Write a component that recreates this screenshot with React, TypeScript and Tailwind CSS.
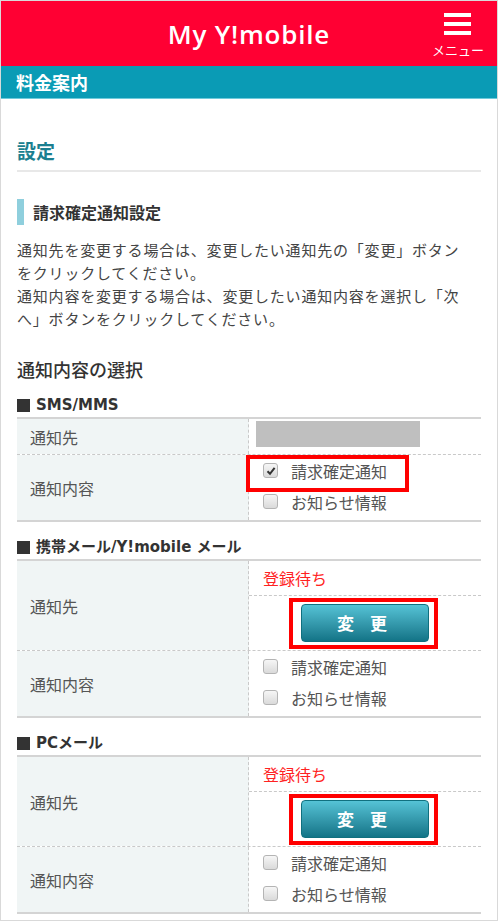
const jp = { fontFamily: '"Noto Sans CJK JP", "Noto Sans", sans-serif' };
const heading = { fontFamily: '"DejaVu Sans", "Noto Sans CJK JP", sans-serif' };

function Checkbox({ checked }: { checked?: boolean }) {
  return (
    <span className="flex h-[15px] w-[15px] items-center justify-center rounded-[3px] border border-[#b4b4b4] bg-gradient-to-b from-[#f6f6f6] to-[#dadada]">
      {checked && (
        <svg width="10" height="10" viewBox="0 0 10 10">
          <path d="M1.5 5.2 L4 7.8 L8.6 1.8" fill="none" stroke="#333" strokeWidth="2" />
        </svg>
      )}
    </span>
  );
}

function Options({ checked, marked }: { checked?: boolean; marked?: boolean }) {
  return (
    <div className="relative flex flex-col pl-[14px]">
      {marked && (
        <div className="absolute left-[-3px] top-0 h-[37px] w-[163px] border-4 border-[#ff0000]" />
      )}
      {["請求確定通知", "お知らせ情報"].map((t, i) => (
        <div key={t} className="flex h-[31px] items-center gap-[13px] text-[16px] text-[#555]">
          <Checkbox checked={checked && i === 0} />
          <span>{t}</span>
        </div>
      ))}
    </div>
  );
}

function ChangeButton() {
  return (
    <div className="relative flex h-[54px] items-start justify-center pt-[8px]">
      <div className="absolute left-[40px] top-[2px] h-[51px] w-[149px] border-4 border-[#ff0000]" />
      <button className="h-[38px] w-[128px] rounded-[4px] border border-[#10707f] bg-gradient-to-b from-[#55c3d6] to-[#127487] text-[17px] font-bold tracking-[6px] text-white">
        変 更
      </button>
    </div>
  );
}

function Section({ title, mt, children }: { title: string; mt: string; children: React.ReactNode }) {
  return (
    <section className={mt}>
      <h4 style={heading} className="flex h-[21px] items-center gap-[6px] text-[15px] font-bold text-[#333]">
        <span className="h-[13px] w-[13px] bg-[#333]" />
        {title}
      </h4>
      <div className="mt-px border-y-2 border-[#d4d4d4]">{children}</div>
    </section>
  );
}

function Row({ label, h, last, children }: { label: string; h: string; last?: boolean; children: React.ReactNode }) {
  return (
    <div className={`grid grid-cols-2 ${h} ${last ? "" : "border-b border-dashed border-[#c9c9c9]"}`}>
      <div className="flex items-center border-r border-dashed border-[#c9c9c9] bg-[#f0f5f5] pl-[13px] text-[16px] text-[#555]">
        {label}
      </div>
      <div className="relative">{children}</div>
    </div>
  );
}

function Pending() {
  return (
    <>
      <div className="flex h-[35px] items-center border-b border-dashed border-[#c9c9c9] pl-[14px] text-[16px] text-[#ff2222]">
        登録待ち
      </div>
      <ChangeButton />
    </>
  );
}

export default function App() {
  return (
    <div style={jp} className="h-[921px] w-[498px] overflow-hidden border border-[#d9d9d9] bg-white">
      <header className="grid h-[65px] grid-cols-[1fr_auto_1fr] items-center bg-[#ff0033] text-white">
        <div />
        <div className="pt-[2px] text-[26px] font-semibold tracking-[0.8px]" style={{ fontFamily: '"Open Sans", sans-serif' }}>
          My Y!mobile
        </div>
        <div className="flex justify-end pr-[13px]">
          <div className="flex flex-col items-center pt-[2px]">
            <div className="flex flex-col gap-[5px]">
              <span className="h-[4px] w-[27px] bg-white" />
              <span className="h-[4px] w-[27px] bg-white" />
              <span className="h-[4px] w-[27px] bg-white" />
            </div>
            <span className="mt-[8px] text-[13px] leading-[14px]">メニュー</span>
          </div>
        </div>
      </header>
      <div className="flex h-[33px] items-center border-b border-[#6fcadb] bg-[#0a9bb5] pl-[15px] text-[18px] font-bold text-white">
        料金案内
      </div>

      <main className="px-[16px]">
        <h2 className="mt-[39px] border-b-2 border-[#e8e8e8] pb-[6px] text-[19px] font-bold leading-[26px] text-[#1b7f90]">
          設定
        </h2>
        <h3 className="mt-[27px] border-l-[7px] border-[#8fcfdd] pl-[9px] text-[16px] font-bold leading-[26px] text-[#333]">
          請求確定通知設定
        </h3>
        <p className="mt-[13px] text-[15px] leading-[23px] tracking-[0.8px] text-[#444]">
          通知先を変更する場合は、変更したい通知先の「変更」ボタン
          <br />
          をクリックしてください。
          <br />
          通知内容を変更する場合は、変更したい通知内容を選択し「次
          <br />
          へ」ボタンをクリックしてください。
        </p>
        <h3 className="mt-[27px] text-[18px] font-medium leading-[25px] text-[#333]">通知内容の選択</h3>

        <Section title="SMS/MMS" mt="mt-[13px]">
          <Row label="通知先" h="h-[36px]">
            <div className="pl-[7px] pt-[2px]">
              <div className="h-[26px] w-[164px] bg-[#bfbfbf]" />
            </div>
          </Row>
          <Row label="通知内容" h="h-[65px]" last>
            <Options checked marked />
          </Row>
        </Section>

        <Section title="携帯メール/Y!mobile メール" mt="mt-[15px]">
          <Row label="通知先" h="h-[90px]">
            <Pending />
          </Row>
          <Row label="通知内容" h="h-[65px]" last>
            <Options />
          </Row>
        </Section>

        <Section title="PCメール" mt="mt-[15px]">
          <Row label="通知先" h="h-[90px]">
            <Pending />
          </Row>
          <Row label="通知内容" h="h-[65px]" last>
            <Options />
          </Row>
        </Section>
      </main>
    </div>
  );
}
